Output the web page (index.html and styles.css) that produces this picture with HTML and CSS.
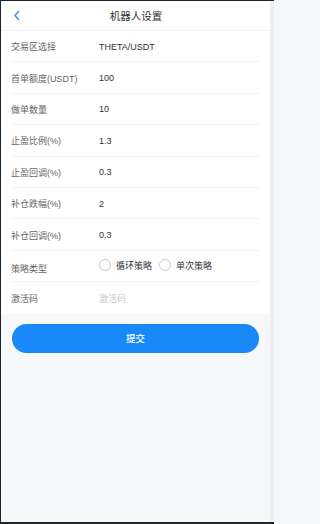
FILE: index.html
```html
<!DOCTYPE html>
<html lang="zh">
<head>
<meta charset="utf-8">
<title>机器人设置</title>
<link rel="stylesheet" href="styles.css">
</head>
<body>
<div class="frame">
  <div class="page">
    <header class="nav">
      <span class="back">
        <svg width="8" height="11" viewBox="0 0 8 11"><path d="M6 1 L2 5.5 L6 10" fill="none" stroke="#1989fa" stroke-width="1.2"/></svg>
      </span>
      <span class="title">机器人设置</span>
    </header>
    <div class="form">
      <div class="row"><span class="label">交易区选择</span><span class="value">THETA/USDT</span></div>
      <div class="row"><span class="label">首单额度(USDT)</span><span class="value">100</span></div>
      <div class="row"><span class="label">做单数量</span><span class="value">10</span></div>
      <div class="row"><span class="label">止盈比例(%)</span><span class="value">1.3</span></div>
      <div class="row"><span class="label">止盈回调(%)</span><span class="value">0.3</span></div>
      <div class="row"><span class="label">补仓跌幅(%)</span><span class="value">2</span></div>
      <div class="row"><span class="label">补仓回调(%)</span><span class="value">0.3</span></div>
      <div class="row row-radio">
        <span class="label label-low">策略类型</span>
        <span class="radios">
          <span class="radio"><span class="circle"></span><span class="radio-text">循环策略</span></span>
          <span class="radio"><span class="circle"></span><span class="radio-text">单次策略</span></span>
        </span>
      </div>
      <div class="row last"><span class="label">激活码</span><span class="value placeholder">激活码</span></div>
    </div>
    <div class="actions">
      <button class="submit">提交</button>
    </div>
  </div>
  <div class="scrollbar"></div>
</div>
</body>
</html>
```

FILE: styles.css
```css
html, body {
  margin: 0;
  padding: 0;
  height: 100%;
}
body {
  font-family: "Liberation Sans", Arial, "Noto Sans CJK SC", sans-serif;
  background: #f7f8fa;
}
.frame {
  display: flex;
  width: 274px;
  height: 524px;
  box-sizing: border-box;
  border-top: 1px solid #1f252b;
  border-left: 1px solid #1f252b;
  border-bottom: 2px solid #1f252b;
  background: #f7f8fa;
}
.page {
  flex: 1;
  background: #f7f8fa;
}
.scrollbar {
  width: 4px;
  background: #eeeeef;
}
.nav {
  position: relative;
  height: 30px;
  box-sizing: border-box;
  border-bottom: 1px solid #f2f3f5;
  background: #fff;
  display: flex;
  align-items: center;
  justify-content: center;
}
.back {
  position: absolute;
  left: 12px;
  top: 9px;
  display: flex;
}
.title {
  font-size: 10.5px;
  color: #323233;
  font-weight: normal;
  padding-left: 1px;
  margin-top: -1px;
}
.form {
  background: #fff;
  padding: 0 10px;
}
.row {
  height: 31.4px;
  box-sizing: border-box;
  border-bottom: 1px solid #f2f3f5;
  display: flex;
  align-items: center;
  font-size: 9px;
  padding-top: 1px;
}
.row.last {
  border-bottom: none;
}
.label {
  width: 88px;
  color: #646566;
  flex: none;
}
.value {
  color: #323233;
}
.placeholder {
  color: #c8c9cc;
}
.label-low {
  margin-top: 4px;
}
.radios {
  display: flex;
  gap: 7px;
  margin-top: -2px;
}
.radio {
  display: flex;
  align-items: center;
  gap: 5px;
}
.circle {
  width: 12px;
  height: 12px;
  box-sizing: border-box;
  border: 1px solid #c8c9cc;
  border-radius: 50%;
}
.radio-text {
  color: #323233;
}
.actions {
  padding: 10px 11px 0 11px;
}
.submit {
  display: block;
  width: 100%;
  height: 29px;
  border: none;
  border-radius: 15px;
  background: #1989fa;
  color: #fff;
  font-family: "Liberation Sans", Arial, "Noto Sans CJK SC", sans-serif;
  font-size: 9.5px;
  font-weight: 500;
  padding: 0;
}
```
